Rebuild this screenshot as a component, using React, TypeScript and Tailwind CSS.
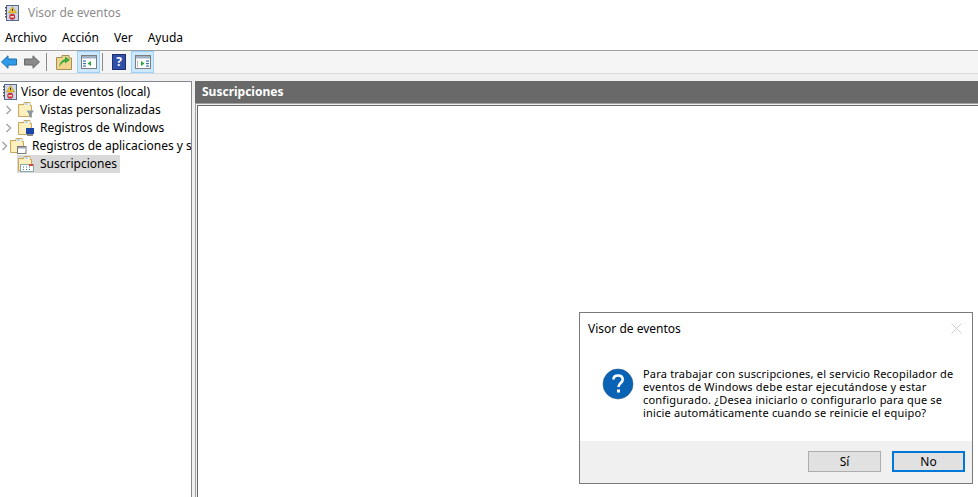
import React from "react";

const font = { fontFamily: '"Noto Sans", "Open Sans", sans-serif' };

function LogIcon({ size = 16 }: { size?: number }) {
  return (
    <svg width={size} height={size} viewBox="0 0 16 16" className="shrink-0">
      <rect x="2.5" y="0.5" width="12" height="15" fill="#cfd8ea" stroke="#5a6a8a" />
      <rect x="1" y="2" width="2" height="1.5" fill="#555" />
      <rect x="1" y="5" width="2" height="1.5" fill="#555" />
      <rect x="1" y="8" width="2" height="1.5" fill="#555" />
      <rect x="1" y="11" width="2" height="1.5" fill="#555" />
      <path d="M8.5 1.5 L12.5 8 H4.5 Z" fill="#f2c531" stroke="#a88412" strokeWidth="0.5" />
      <rect x="8" y="3.8" width="1" height="2.4" fill="#333" />
      <circle cx="8.2" cy="11.8" r="3" fill="#c9343a" />
      <rect x="6.4" y="11.2" width="3.6" height="1.2" fill="#fff" />
    </svg>
  );
}

function Folder({ children }: { children?: React.ReactNode }) {
  return (
    <svg width="18" height="18" viewBox="0 0 18 18" className="shrink-0">
      <path d="M1.5 3.5 H7 V1.5 H13 V4.5 H14.5 V15.5 H1.5 Z" fill="#fbe8a8" stroke="#c9a85e" />
      <rect x="7.5" y="2" width="5" height="2.5" fill="#fff" />
      <rect x="8" y="2.5" width="3" height="1" fill="#6fb0df" />
      <rect x="2.5" y="5" width="11" height="10" fill="#fdf0bf" />
      {children}
    </svg>
  );
}

function Chevron() {
  return (
    <svg width="8" height="10" viewBox="0 0 8 10" className="shrink-0">
      <path d="M1.5 1 L5.5 5 L1.5 9" fill="none" stroke="#a6a6a6" strokeWidth="1.5" />
    </svg>
  );
}

function ArrowLeft({ color, edge }: { color: string; edge: string }) {
  return (
    <svg width="16" height="14" viewBox="0 0 16 14">
      <path d="M0.5 7 L7 0.8 V4 H15.5 V10 H7 V13.2 Z" fill={color} stroke={edge} />
    </svg>
  );
}

function PaneIcon({ right }: { right?: boolean }) {
  return (
    <svg width="16" height="14" viewBox="0 0 16 14">
      <rect x="0.5" y="0.5" width="15" height="13" fill="#fff" stroke="#7c7c7c" />
      <rect x="1" y="1" width="14" height="2.5" fill="#9fb0c2" />
      {right ? (
        <>
          <path d="M6 6 L9.5 8.5 L6 11 Z" fill="#27a83a" />
          <rect x="11" y="5.5" width="3" height="1.2" fill="#3a6fb0" />
          <rect x="11" y="8" width="3" height="1.2" fill="#3a6fb0" />
          <rect x="11" y="10.5" width="3" height="1.2" fill="#3a6fb0" />
          <rect x="2" y="5" width="1" height="7.5" fill="#bbb" />
        </>
      ) : (
        <>
          <path d="M10 6 L6.5 8.5 L10 11 Z" fill="#27a83a" />
          <rect x="2" y="5.5" width="3" height="1.2" fill="#3a6fb0" />
          <rect x="2" y="8" width="3" height="1.2" fill="#3a6fb0" />
          <rect x="2" y="10.5" width="3" height="1.2" fill="#3a6fb0" />
        </>
      )}
    </svg>
  );
}

function ToolToggle({ children }: { children: React.ReactNode }) {
  return (
    <div className="w-[23px] h-[22px] flex items-center justify-center bg-[#cce8ff] border border-[#99d1ff]">
      {children}
    </div>
  );
}

function TreeRow({
  label,
  icon,
  selected,
  chevron = true,
}: {
  label: string;
  icon: React.ReactNode;
  selected?: boolean;
  chevron?: boolean;
}) {
  return (
    <div className="h-[18px] flex items-center">
      <div className="w-[17px] flex justify-center pl-[1px]">{chevron && <Chevron />}</div>
      <div className={`flex items-center h-[18px] pr-[3px] ${selected ? "bg-[#d9d9d9]" : ""}`}>
        {icon}
        <span className="ml-[5px] whitespace-nowrap">{label}</span>
      </div>
    </div>
  );
}

export default function App() {
  return (
    <div
      className="relative w-[978px] h-[497px] overflow-hidden bg-[#f0f0f0] text-[12px] text-black flex flex-col"
      style={font}
    >
      <div className="h-[26px] bg-white flex items-center pl-[4px] shrink-0">
        <LogIcon />
        <span className="ml-[8px] text-[#8c8c8c]">Visor de eventos</span>
      </div>
      <div className="h-[25px] bg-white border-b border-[#a0a0a0] flex items-center gap-[15px] pl-[5px] shrink-0">
        <span>Archivo</span>
        <span>Acción</span>
        <span>Ver</span>
        <span>Ayuda</span>
      </div>
      <div className="h-[23px] bg-[#f5f5f5] border-b border-[#d9d9d9] flex items-center shrink-0">
        <div className="ml-[1px]">
          <ArrowLeft color="#2f9be8" edge="#1c6fb3" />
        </div>
        <div className="ml-[7px] -scale-x-100">
          <ArrowLeft color="#8a8a8a" edge="#666" />
        </div>
        <div className="w-px h-[18px] bg-[#8a8a8a] ml-[6px]" />
        <div className="ml-[9px]">
          <svg width="16" height="16" viewBox="0 0 16 16">
            <path d="M0.5 3.5 H6 V1.5 H13 V4 H15.5 V15.5 H0.5 Z" fill="#f0d68c" stroke="#a88f52" />
            <path d="M3 13 C4 8 6 6 9 5 V2.5 L14 6 L9 9.5 V7.5 C7 8 5 10 3 13 Z" fill="#3fa83f" />
          </svg>
        </div>
        <div className="ml-[5px]">
          <ToolToggle>
            <PaneIcon />
          </ToolToggle>
        </div>
        <div className="w-px h-[18px] bg-[#8a8a8a] ml-[2px]" />
        <div className="ml-[9px] w-[14px] h-[16px] bg-[#2f4fa8] border border-[#1e3070] flex items-center justify-center text-white text-[12px] font-bold">
          ?
        </div>
        <div className="ml-[5px]">
          <ToolToggle>
            <PaneIcon right />
          </ToolToggle>
        </div>
      </div>
      <div className="flex-1 flex gap-[3px] pt-[7px] min-h-0">
        <div className="w-[192px] bg-white border border-[#828790] border-b-0 border-l-0 overflow-hidden shrink-0">
          <div className="h-[19px] flex items-center pl-[2px]">
            <LogIcon />
            <span className="ml-[3px] whitespace-nowrap">Visor de eventos (local)</span>
          </div>
          <TreeRow
            label="Vistas personalizadas"
            icon={
              <Folder>
                <path d="M9.5 9.5 H17 L14.5 13 V17 L12 15.5 V13 Z" fill="#8899a6" />
              </Folder>
            }
          />
          <TreeRow
            label="Registros de Windows"
            icon={
              <Folder>
                <rect x="9" y="9" width="8" height="6" fill="#1c45a8" />
                <rect x="10" y="15" width="6" height="2" fill="#888" />
              </Folder>
            }
          />
          <TreeRow
            label="Registros de aplicaciones y s"
            icon={
              <Folder>
                <rect x="8.5" y="9.5" width="8.5" height="7" fill="#fff" stroke="#777" />
                <rect x="9" y="10" width="7.5" height="1.5" fill="#9aa5b5" />
              </Folder>
            }
          />
          <TreeRow
            label="Suscripciones"
            selected
            chevron={false}
            icon={
              <Folder>
                <rect x="3.5" y="9.5" width="13" height="7" fill="#fff" stroke="#8aa" />
                <rect x="12" y="9" width="4" height="2" fill="#d9443c" />
                <path d="M6 12h1M9 12h1M12 12h1M6 14.5h1M9 14.5h1M12 14.5h1" stroke="#3a6fb0" />
              </Folder>
            }
          />
        </div>
        <div className="flex-1 flex flex-col min-w-0">
          <div className="h-[22px] bg-[#696969] text-white font-bold flex items-center pl-[7px] shrink-0">
            Suscripciones
          </div>
          <div className="flex-1 bg-[#a0a0a0] pt-[1px] pl-[1px]">
            <div className="h-full bg-[#f0f0f0] pt-[1px] pl-[1px]">
              <div className="h-full bg-[#696969] pt-[1px] pl-[1px]">
                <div className="h-full bg-white" />
              </div>
            </div>
          </div>
        </div>
      </div>

      <div className="absolute left-[579px] top-[312px] w-[394px] h-[172px] bg-white border border-[#7a7a7a] flex flex-col">
        <div className="h-[31px] flex items-center justify-between pl-[8px] pr-[10px] shrink-0">
          <span>Visor de eventos</span>
          <svg width="11" height="11" viewBox="0 0 11 11">
            <path d="M0.5 0.5 L10.5 10.5 M10.5 0.5 L0.5 10.5" stroke="#cfcfcf" />
          </svg>
        </div>
        <div className="flex-1 flex pl-[22px] pt-[23px]">
          <svg width="32" height="32" viewBox="0 0 32 32" className="shrink-0 mt-[1px]">
            <circle cx="16" cy="16" r="15" fill="#0a62b5" stroke="#2a5a8a" strokeWidth="0.6" />
            <path
              d="M11.5 11.5 C11.5 8.5 14 7.5 16 7.5 C19 7.5 20.7 9.3 20.7 11.5 C20.7 15 16.5 15 16.5 19"
              fill="none"
              stroke="#fff"
              strokeWidth="2.6"
            />
            <rect x="15" y="21.5" width="3" height="3" fill="#fff" />
          </svg>
          <div className="ml-[9px] leading-[13px] text-[11px] tracking-[0.2px]">
            <div className="h-[13px] whitespace-nowrap">Para trabajar con suscripciones, el servicio Recopilador de</div>
            <div className="h-[13px] whitespace-nowrap">eventos de Windows debe estar ejecutándose y estar</div>
            <div className="h-[13px] whitespace-nowrap">configurado. ¿Desea iniciarlo o configurarlo para que se</div>
            <div className="h-[13px] whitespace-nowrap">inicie automáticamente cuando se reinicie el equipo?</div>
          </div>
        </div>
        <div className="h-[42px] bg-[#f0f0f0] flex items-start justify-end gap-[11px] pt-[10px] pr-[7px] shrink-0">
          <button className="w-[73px] h-[21px] bg-[#e1e1e1] border border-[#adadad] flex items-center justify-center text-[12px]">
            Sí
          </button>
          <button className="w-[73px] h-[21px] bg-[#e1e1e1] border-2 border-[#0078d7] flex items-center justify-center text-[12px]">
            No
          </button>
        </div>
      </div>
    </div>
  );
}
